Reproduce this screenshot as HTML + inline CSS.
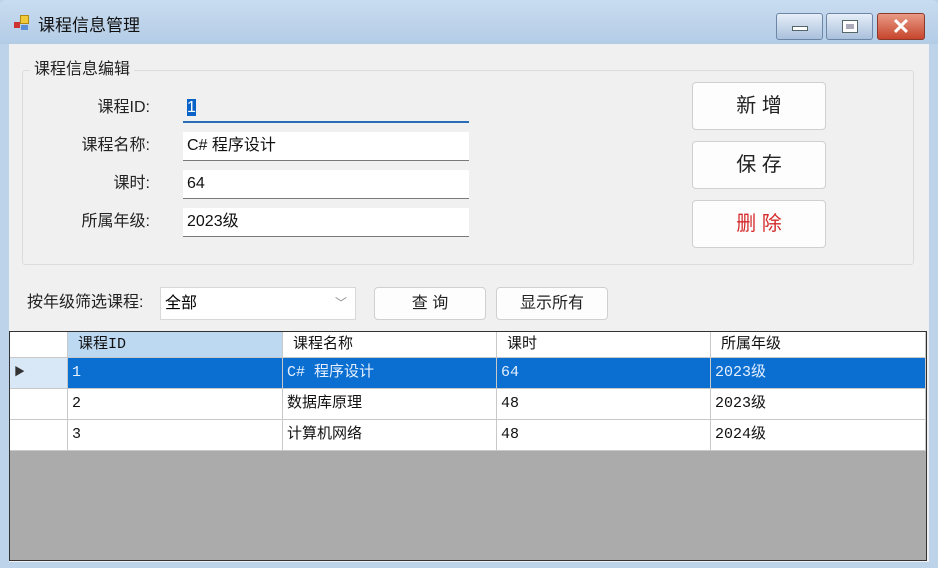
<!DOCTYPE html>
<html><head><meta charset="utf-8"><style>
*{margin:0;padding:0;box-sizing:border-box}
body{width:938px;height:568px;overflow:hidden;background:#bcd3ea;font-family:"Liberation Sans","Noto Sans CJK SC",sans-serif;position:relative}
.a{position:absolute}
#title{left:0;top:0;width:938px;height:44px;background:linear-gradient(#c9dcf0,#b3cce6);border-radius:6px 6px 0 0}
#client{left:9px;top:44px;width:920px;height:518px;background:#f0f0f0}
.lbl{font-size:16px;line-height:20px;color:#222;text-align:right;width:150px}
.tb{left:183px;width:286px;height:29px;background:#fff;border-bottom:1.5px solid #7a7a7a;font-size:16px;line-height:28px;padding:0 4px;color:#111}
.btn{background:#fdfdfd;border:1px solid #d0d0d0;border-radius:4px;text-align:center;color:#222}
.big{left:692px;width:134px;height:48px;font-size:20px;line-height:46px}
.cell{position:absolute;font-family:"Liberation Mono","Noto Sans CJK SC",monospace;font-size:15px;padding-left:4px;color:#111;border-right:1px solid #c8c8c8;border-bottom:1px solid #c8c8c8;background:#fff}
</style></head><body>
<div class="a" id="title"></div>
<div class="a" style="left:14px;top:22px;width:6px;height:6px;background:#c33"></div>
<div class="a" style="left:20px;top:15px;width:9px;height:9px;background:#f1c93a;border:1px solid #b08a10"></div>
<div class="a" style="left:21px;top:25px;width:7px;height:5px;background:#5a8ed8"></div>
<div class="a" style="left:38px;top:15px;font-size:17px;line-height:22px;color:#111">课程信息管理</div>
<div class="a" style="left:776px;top:13px;width:47px;height:27px;border:1px solid #6d86a6;border-radius:3px;background:linear-gradient(#e6eef8,#a9c0dc)"><div class="a" style="left:15px;top:12px;width:16px;height:5px;background:#fff;border:1px solid #566"></div></div>
<div class="a" style="left:826px;top:13px;width:47px;height:27px;border:1px solid #6d86a6;border-radius:3px;background:linear-gradient(#e6eef8,#a9c0dc)"><div class="a" style="left:15px;top:6px;width:16px;height:13px;background:#fff;border:1px solid #566"><div class="a" style="left:3px;top:3px;width:8px;height:5px;background:#aab"></div></div></div>
<div class="a" style="left:877px;top:13px;width:48px;height:27px;border:1px solid #8a3a2a;border-radius:3px;background:linear-gradient(#e99a85,#c6452c);color:#fff;font-size:22px;font-weight:bold;text-align:center;line-height:26px">✕</div>
<div class="a" id="client"></div>
<div class="a" style="left:22px;top:70px;width:892px;height:195px;border:1px solid #dcdcdc;border-radius:3px"></div>
<div class="a" style="left:30px;top:60px;background:#f0f0f0;padding:0 4px;font-size:16px;line-height:20px;color:#222">课程信息编辑</div>
<div class="a lbl" style="left:0;top:98px">课程ID:</div>
<div class="a lbl" style="left:0;top:136px">课程名称:</div>
<div class="a lbl" style="left:0;top:174px">课时:</div>
<div class="a lbl" style="left:0;top:212px">所属年级:</div>
<div class="a tb" style="top:94px;background:#f0f0f0;border-bottom:2px solid #2a6cb5"><span style="background:#0a64c8;color:#fff">1</span></div>
<div class="a tb" style="top:132px">C# 程序设计</div>
<div class="a tb" style="top:170px">64</div>
<div class="a tb" style="top:208px">2023级</div>
<div class="a btn big" style="top:82px">新 增</div>
<div class="a btn big" style="top:141px">保 存</div>
<div class="a btn big" style="top:200px;color:#d42a2a">删 除</div>
<div class="a" style="left:27px;top:293px;font-size:16px;line-height:20px;color:#222">按年级筛选课程:</div>
<div class="a" style="left:160px;top:287px;width:196px;height:33px;background:#fff;border:1px solid #d8d8d8;font-size:16px;line-height:31px;padding:0 4px">全部<span class="a" style="right:8px;top:0;color:#888;font-size:12px">﹀</span></div>
<div class="a btn" style="left:374px;top:287px;width:112px;height:33px;font-size:16px;line-height:31px">查 询</div>
<div class="a btn" style="left:496px;top:287px;width:112px;height:33px;font-size:16px;line-height:31px">显示所有</div>
<div class="a" style="left:9px;top:331px;width:918px;height:230px;background:#ababab;border:1px solid #333">
<div class="cell" style="left:0;top:0;width:58px;height:26px"></div>
<div class="cell" style="left:58px;top:0;width:215px;height:26px;background:#bcd9f1;padding-left:10px;line-height:25px">课程ID</div>
<div class="cell" style="left:273px;top:0;width:214px;height:26px;padding-left:10px;line-height:25px">课程名称</div>
<div class="cell" style="left:487px;top:0;width:214px;height:26px;padding-left:10px;line-height:25px">课时</div>
<div class="cell" style="left:701px;top:0;width:215px;height:26px;padding-left:10px;line-height:25px">所属年级</div>
<div class="cell" style="left:0;top:26px;width:58px;height:31px;background:#d9e8f6;line-height:30px;font-size:11px;color:#333">▶</div>
<div class="cell" style="left:58px;top:26px;width:215px;height:31px;background:#0a6fd1;color:#e6f0ff;line-height:30px">1</div>
<div class="cell" style="left:273px;top:26px;width:214px;height:31px;background:#0a6fd1;color:#e6f0ff;line-height:30px">C# 程序设计</div>
<div class="cell" style="left:487px;top:26px;width:214px;height:31px;background:#0a6fd1;color:#e6f0ff;line-height:30px">64</div>
<div class="cell" style="left:701px;top:26px;width:215px;height:31px;background:#0a6fd1;color:#e6f0ff;line-height:30px">2023级</div>
<div class="cell" style="left:0;top:57px;width:58px;height:31px"></div>
<div class="cell" style="left:58px;top:57px;width:215px;height:31px;line-height:30px">2</div>
<div class="cell" style="left:273px;top:57px;width:214px;height:31px;line-height:30px">数据库原理</div>
<div class="cell" style="left:487px;top:57px;width:214px;height:31px;line-height:30px">48</div>
<div class="cell" style="left:701px;top:57px;width:215px;height:31px;line-height:30px">2023级</div>
<div class="cell" style="left:0;top:88px;width:58px;height:31px"></div>
<div class="cell" style="left:58px;top:88px;width:215px;height:31px;line-height:30px">3</div>
<div class="cell" style="left:273px;top:88px;width:214px;height:31px;line-height:30px">计算机网络</div>
<div class="cell" style="left:487px;top:88px;width:214px;height:31px;line-height:30px">48</div>
<div class="cell" style="left:701px;top:88px;width:215px;height:31px;line-height:30px">2024级</div>
</div>
</body></html>
